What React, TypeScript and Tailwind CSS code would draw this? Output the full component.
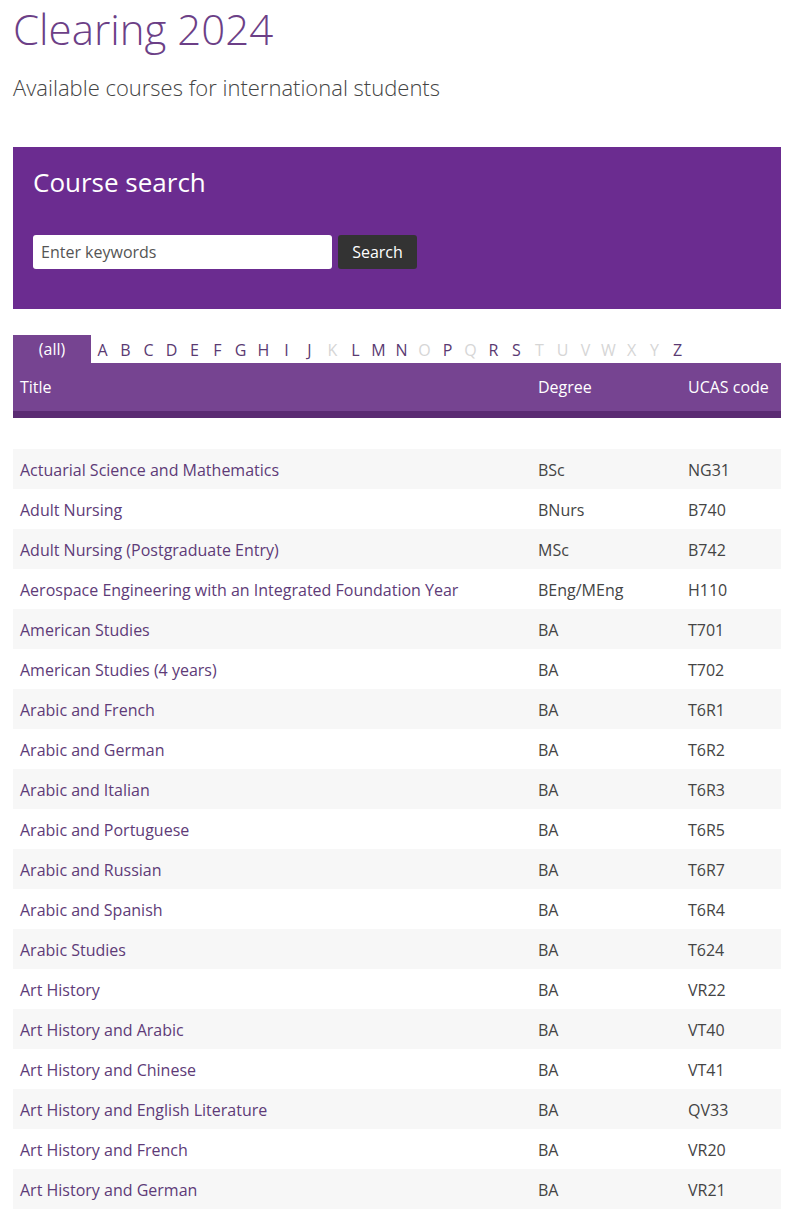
import React from "react";

const letters = "ABCDEFGHIJKLMNOPQRSTUVWXYZ".split("");
const disabled = new Set(["K", "O", "Q", "T", "U", "V", "W", "X", "Y"]);

const rows: [string, string, string][] = [
  ["Actuarial Science and Mathematics", "BSc", "NG31"],
  ["Adult Nursing", "BNurs", "B740"],
  ["Adult Nursing (Postgraduate Entry)", "MSc", "B742"],
  ["Aerospace Engineering with an Integrated Foundation Year", "BEng/MEng", "H110"],
  ["American Studies", "BA", "T701"],
  ["American Studies (4 years)", "BA", "T702"],
  ["Arabic and French", "BA", "T6R1"],
  ["Arabic and German", "BA", "T6R2"],
  ["Arabic and Italian", "BA", "T6R3"],
  ["Arabic and Portuguese", "BA", "T6R5"],
  ["Arabic and Russian", "BA", "T6R7"],
  ["Arabic and Spanish", "BA", "T6R4"],
  ["Arabic Studies", "BA", "T624"],
  ["Art History", "BA", "VR22"],
  ["Art History and Arabic", "BA", "VT40"],
  ["Art History and Chinese", "BA", "VT41"],
  ["Art History and English Literature", "BA", "QV33"],
  ["Art History and French", "BA", "VR20"],
  ["Art History and German", "BA", "VR21"],
];

export default function App() {
  return (
    <div
      className="w-[790px] bg-white pl-[13px] pr-[9px] pb-[40px]"
      style={{ fontFamily: '"Open Sans", "Noto Sans", sans-serif' }}
    >
      <h1 className="pt-[4px] text-[42px] font-light leading-[50px] text-[#6c3f87]">
        Clearing 2024
      </h1>
      <p className="mt-[18px] text-[22px] font-light leading-[30px] text-[#444]">
        Available courses for international students
      </p>

      <div className="mt-[45px] h-[162px] bg-[#6b2c90] px-[20px] pt-[17px]">
        <h2 className="text-[26px] leading-[36px] text-white">Course search</h2>
        <div className="mt-[35px] flex gap-[6px]">
          <div className="flex h-[34px] w-[299px] items-center rounded-[3px] bg-white px-[8px] text-[16px] text-[#555]">
            Enter keywords
          </div>
          <div className="flex h-[34px] w-[79px] items-center justify-center rounded-[3px] bg-[#333333] text-[16px] text-white">
            Search
          </div>
        </div>
      </div>

      <div className="mt-[26px] flex h-[28px] items-center text-[16px]">
        <div className="flex h-[28px] w-[78px] items-center justify-center bg-[#764491] text-white">
          (all)
        </div>
        {letters.map((l) => (
          <div
            key={l}
            className={`flex h-[28px] w-[23px] items-center justify-center pt-[2px] ${
              disabled.has(l) ? "text-[#d6d6d6]" : "text-[#5a3a72]"
            }`}
          >
            {l}
          </div>
        ))}
      </div>
      <div className="flex h-[48px] items-center bg-[#764491] text-[16px] text-white">
        <div className="w-[518px] shrink-0 pl-[7px]">Title</div>
        <div className="w-[150px] shrink-0 pl-[7px]">Degree</div>
        <div className="w-[100px] shrink-0 pl-[7px]">UCAS code</div>
      </div>
      <div className="h-[7px] bg-[#5a2b72]" />

      <div className="mt-[31px]">
        {rows.map(([t, d, c], i) => (
          <div
            key={t}
            className={`flex h-[40px] items-center pt-[1px] text-[16px] ${
              i % 2 === 0 ? "bg-[#f7f7f7]" : "bg-white"
            }`}
          >
            <div className="w-[518px] shrink-0 pl-[7px] text-[#5e3b78]">{t}</div>
            <div className="w-[150px] shrink-0 pl-[7px] text-[#444]">{d}</div>
            <div className="w-[100px] shrink-0 pl-[7px] text-[#444]">{c}</div>
          </div>
        ))}
      </div>
    </div>
  );
}
